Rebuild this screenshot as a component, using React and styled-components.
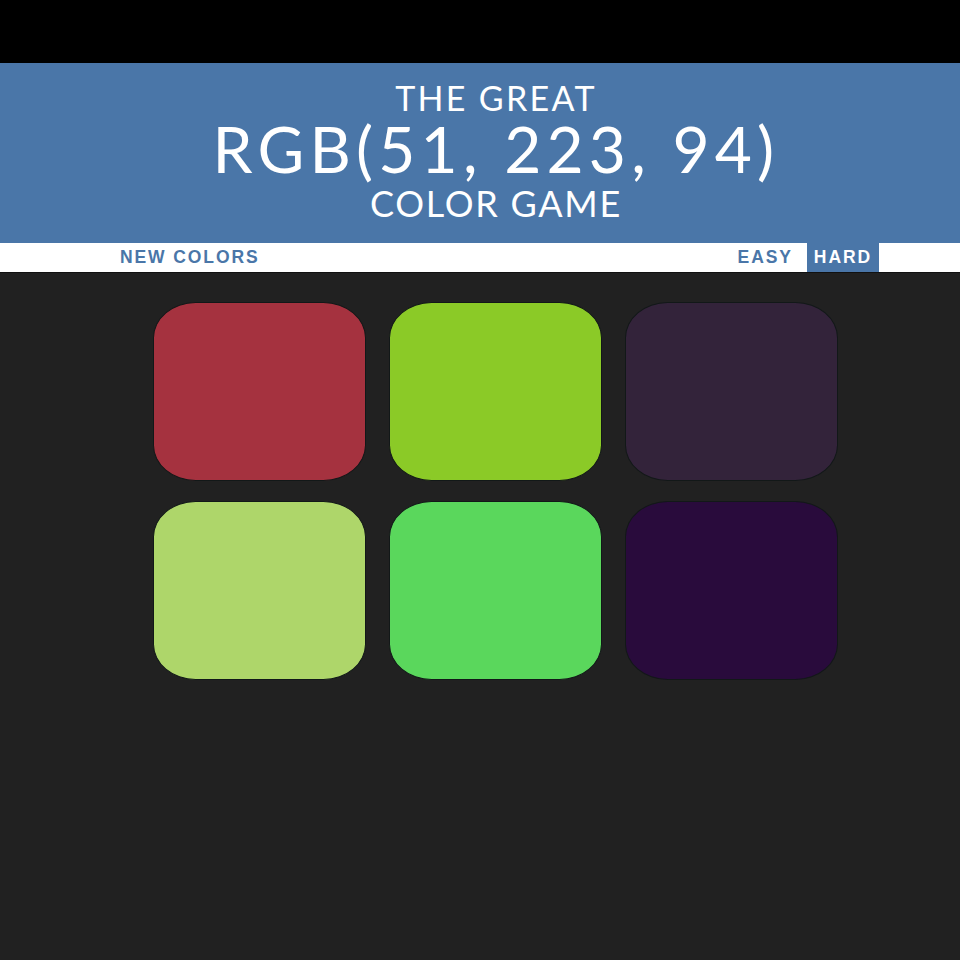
import React from "react";
import styled, { createGlobalStyle } from "styled-components";

const colors = ["#a5323f", "#8bca27", "#33233a", "#aed66a", "#5ad75c", "#290b3c"];
const picked = "RGB(51, 223, 94)";

const GlobalStyle = createGlobalStyle`
  html, body {
    margin: 0;
    padding: 0;
    background: #212121;
  }
  * {
    box-sizing: border-box;
  }
`;

const App = () => {
  return (
    <>
      <GlobalStyle />
      <Page>
        <TopBand />
        <Header>
          <Title>
            <Line $size={34} $spacing={2.3}>The great</Line>
            <Line $size={64} $spacing={5.2} $gap={2}>
              {picked}
            </Line>
            <Line $size={36} $spacing={1.7} $gap={4}>
              Color game
            </Line>
          </Title>
        </Header>
        <Stripe>
          <StripeInner>
            <StripeButton>New colors</StripeButton>
            <Spacer />
            <StripeButton>Easy</StripeButton>
            <StripeButton $selected>Hard</StripeButton>
          </StripeInner>
        </Stripe>
        <Board>
          <Grid>
            {colors.map((c) => (
              <Square key={c} style={{ background: c }} />
            ))}
          </Grid>
        </Board>
      </Page>
    </>
  );
};

export default App;

const Page = styled.div`
  min-height: 100vh;
  background: #212121;
`;

const TopBand = styled.div`
  height: 63px;
  background: #000;
`;

const Header = styled.header`
  background: #4a76a8;
  padding: 18px 0 22px 32px;
  text-align: center;
  color: #fff;
`;

const Title = styled.h1`
  margin: 0;
  font-family: Lato, "Open Sans", sans-serif;
  font-weight: 400;
  text-transform: uppercase;
`;

const Line = styled.span`
  display: block;
  font-size: ${(p) => p.$size}px;
  line-height: 1;
  letter-spacing: ${(p) => p.$spacing}px;
  margin-top: ${(p) => p.$gap || 0}px;
`;

const Stripe = styled.div`
  background: #fff;
  height: 30px;
  border-bottom: 1px solid #111;
  padding-left: 32px;
`;

const StripeInner = styled.div`
  width: 766px;
  margin: 0 auto;
  display: flex;
  height: 29px;
`;

const Spacer = styled.div`
  flex: 1;
`;

const StripeButton = styled.button`
  border: none;
  margin: 0;
  padding: 0 7px;
  height: 29px;
  line-height: 29px;
  font-family: "Liberation Sans", Arial, sans-serif;
  font-weight: 700;
  font-size: 17.5px;
  letter-spacing: 1.9px;
  text-transform: uppercase;
  background: ${(p) => (p.$selected ? "#4a76a8" : "#fff")};
  color: ${(p) => (p.$selected ? "#fff" : "#4a76a8")};
  & + & {
    margin-left: 7px;
  }
`;

const Board = styled.main`
  padding: 29px 0 0 31px;
`;

const Grid = styled.div`
  width: 685px;
  margin: 0 auto;
  display: grid;
  grid-template-columns: repeat(3, 213px);
  grid-auto-rows: 179px;
  column-gap: 23px;
  row-gap: 20px;
`;

const Square = styled.div`
  border: 1px solid #121818;
  border-radius: 20%;
`;
